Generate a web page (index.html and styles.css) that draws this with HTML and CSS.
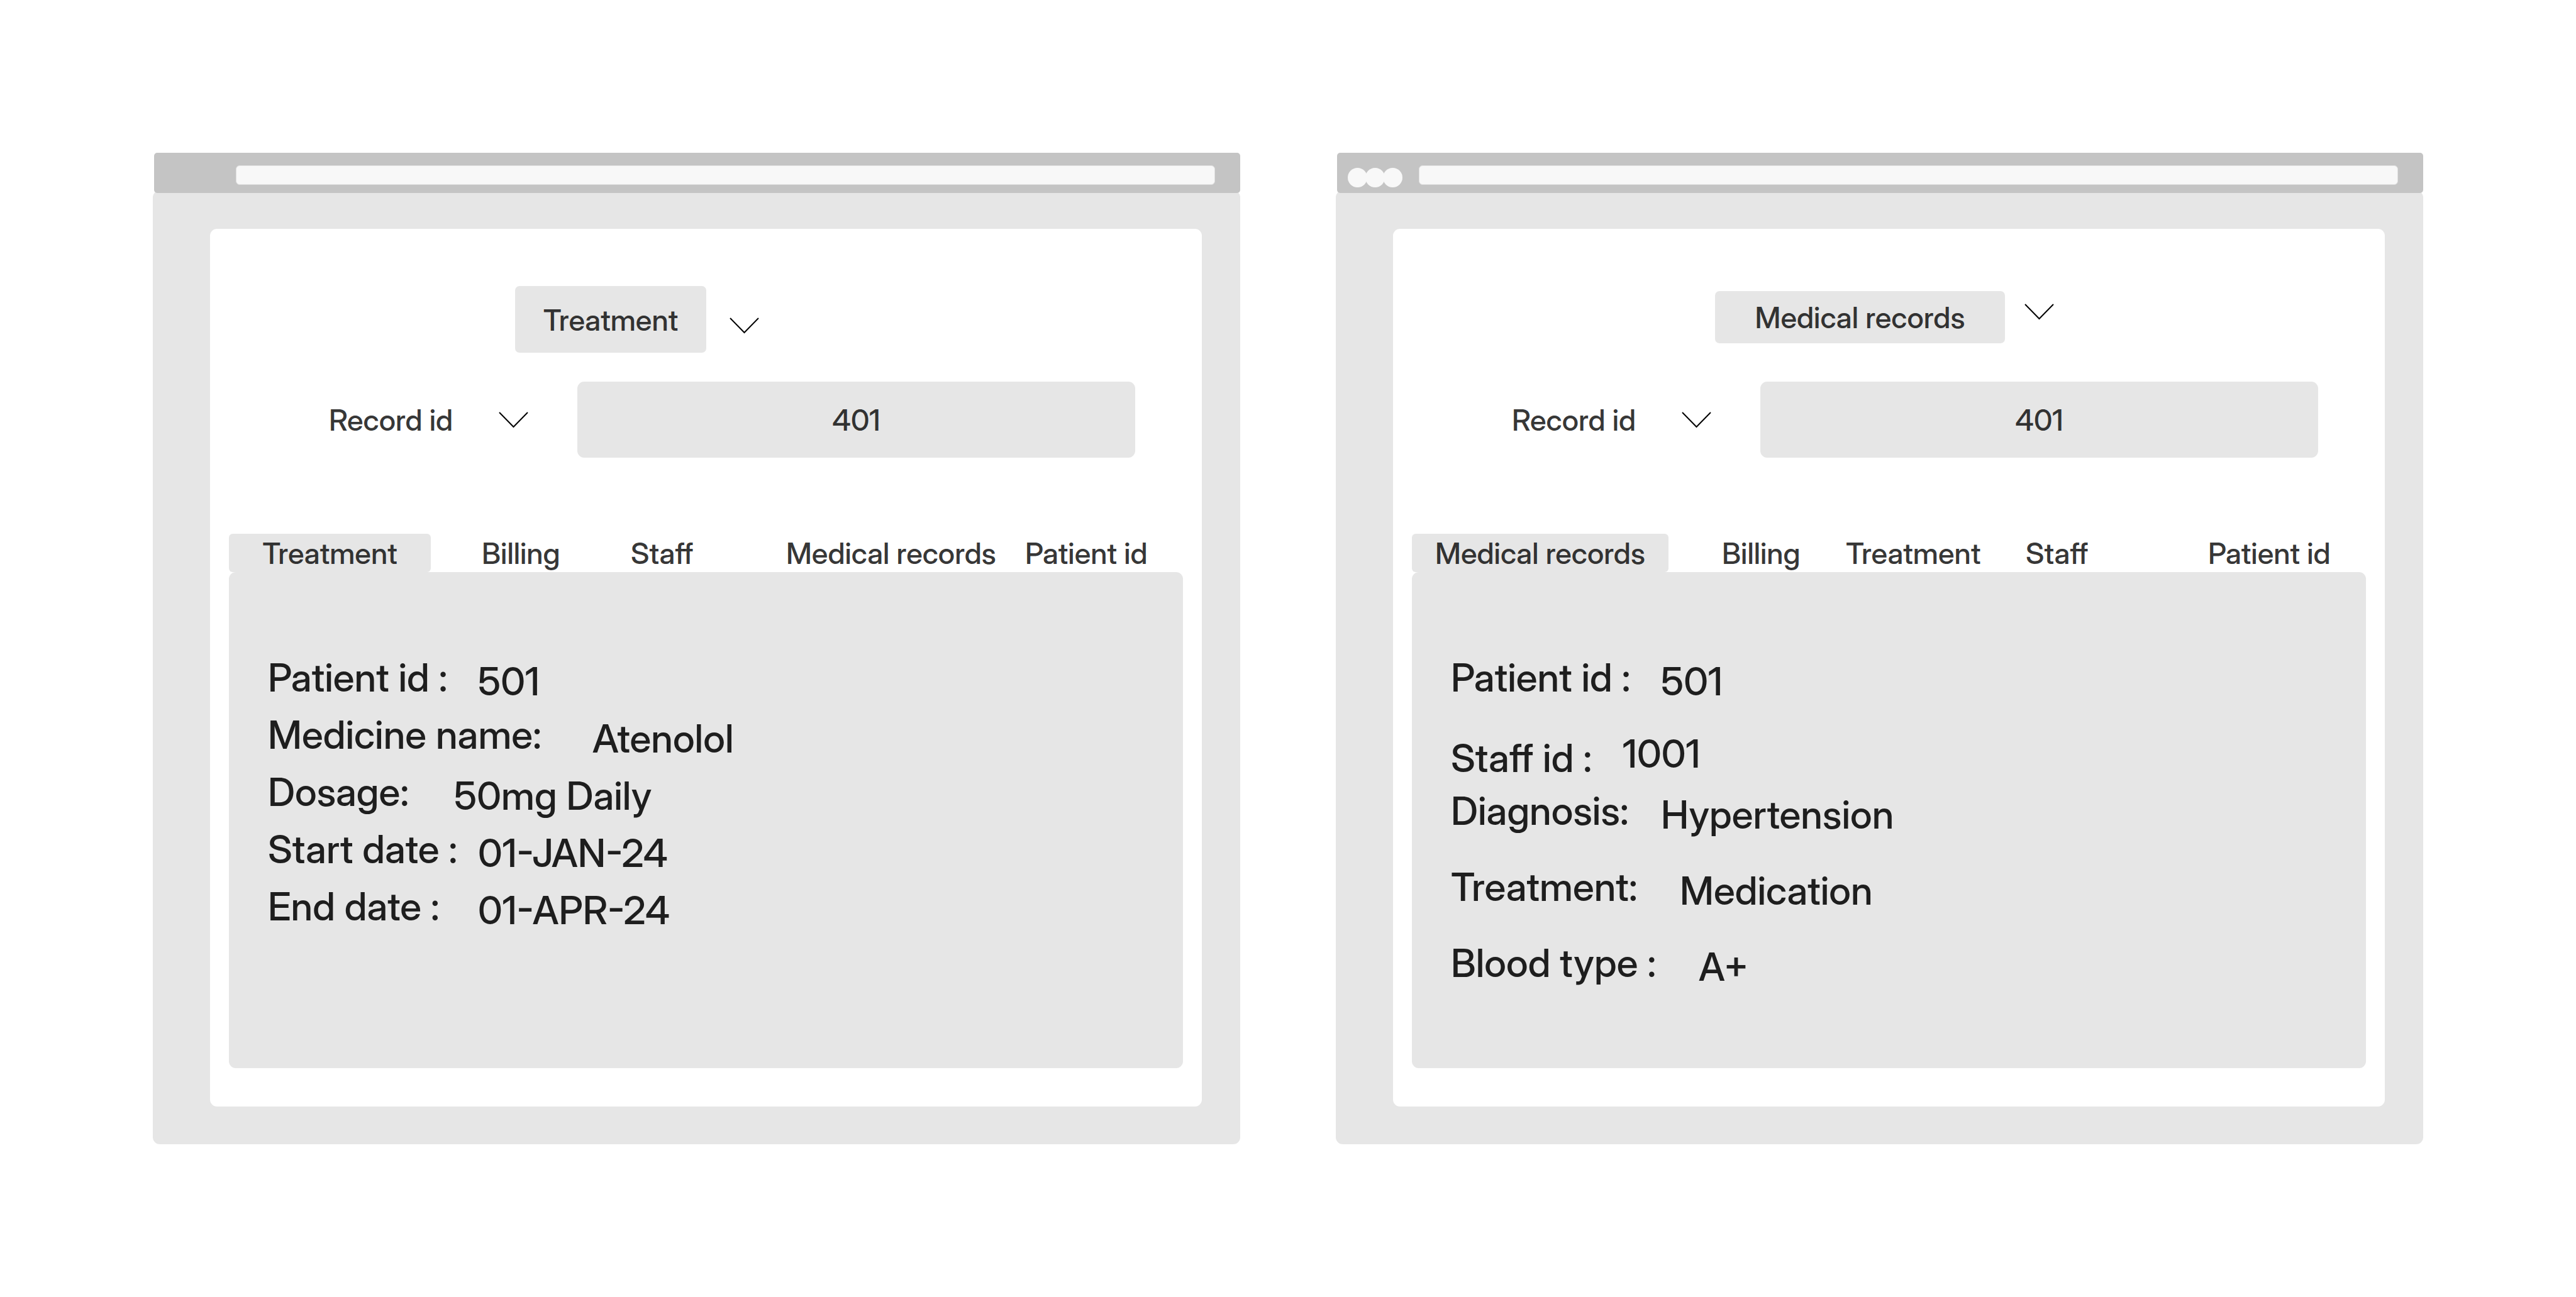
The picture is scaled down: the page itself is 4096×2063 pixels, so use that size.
FILE: index.html
```html
<!DOCTYPE html>
<html lang="en">
<head>
<meta charset="utf-8">
<title>Patient records</title>
<link rel="stylesheet" href="styles.css">
</head>
<body>
<main class="board">
  <section class="window" aria-label="Treatment record">
    <header class="titlebar">
      <div class="dots"></div>
      <input class="address" type="text" aria-label="Address">
    </header>
    <div class="frame">
      <div class="panel">
        <div class="picker picker-tall">
          <select class="picker-select" aria-label="Record type">
            <option>Treatment</option>
          </select>
          <svg class="chevron" viewBox="0 0 47 26" aria-hidden="true"><path d="M1 1 L23.500 24 L46 1"/></svg>
        </div>
        <div class="search">
          <select class="search-field" aria-label="Search by">
            <option>Record id</option>
          </select>
          <svg class="chevron" viewBox="0 0 47 26" aria-hidden="true"><path d="M1 1 L23.500 24 L46 1"/></svg>
          <input class="search-value" type="text" value="401" aria-label="Record id">
        </div>
        <div class="tabs tabs-treatment" role="tablist">
          <button class="tab tab-active" role="tab" aria-selected="true">Treatment</button>
          <button class="tab" role="tab">Billing</button>
          <button class="tab" role="tab">Staff</button>
          <button class="tab" role="tab">Medical records</button>
          <button class="tab" role="tab">Patient id</button>
        </div>
        <dl class="details">
          <div class="row"><dt class="label">Patient id :</dt><dd class="value">501</dd></div>
          <div class="row"><dt class="label label-widest">Medicine name:</dt><dd class="value">Atenolol</dd></div>
          <div class="row"><dt class="label label-short">Dosage:</dt><dd class="value">50mg Daily</dd></div>
          <div class="row"><dt class="label">Start date :</dt><dd class="value">01-JAN-24</dd></div>
          <div class="row"><dt class="label">End date :</dt><dd class="value">01-APR-24</dd></div>
        </dl>
      </div>
    </div>
  </section>

  <section class="window" aria-label="Medical record">
    <header class="titlebar">
      <div class="dots"><span class="dot"></span><span class="dot"></span><span class="dot"></span></div>
      <input class="address" type="text" aria-label="Address">
    </header>
    <div class="frame">
      <div class="panel">
        <div class="picker picker-wide">
          <select class="picker-select" aria-label="Record type">
            <option>Medical records</option>
          </select>
          <svg class="chevron" viewBox="0 0 47 26" aria-hidden="true"><path d="M1 1 L23.500 24 L46 1"/></svg>
        </div>
        <div class="search">
          <select class="search-field" aria-label="Search by">
            <option>Record id</option>
          </select>
          <svg class="chevron" viewBox="0 0 47 26" aria-hidden="true"><path d="M1 1 L23.500 24 L46 1"/></svg>
          <input class="search-value" type="text" value="401" aria-label="Record id">
        </div>
        <div class="tabs tabs-medical" role="tablist">
          <button class="tab tab-active" role="tab" aria-selected="true">Medical records</button>
          <button class="tab" role="tab">Billing</button>
          <button class="tab" role="tab">Treatment</button>
          <button class="tab" role="tab">Staff</button>
          <button class="tab" role="tab">Patient id</button>
        </div>
        <dl class="details">
          <div class="row row-spaced"><dt class="label">Patient id :</dt><dd class="value">501</dd></div>
          <div class="row row-raised"><dt class="label label-shortest">Staff id :</dt><dd class="value">1001</dd></div>
          <div class="row row-spaced"><dt class="label">Diagnosis:</dt><dd class="value">Hypertension</dd></div>
          <div class="row row-spaced"><dt class="label label-long">Treatment:</dt><dd class="value">Medication</dd></div>
          <div class="row row-spaced"><dt class="label label-longer">Blood type :</dt><dd class="value">A+</dd></div>
        </dl>
      </div>
    </div>
  </section>
</main>
</body>
</html>
```

FILE: styles.css
```css
* {
  box-sizing: border-box;
}

body {
  margin: 0;
  background: #fff;
  color: rgba(0, 0, 0, 0.8);
  font-family: "Inter Display", Inter, "Liberation Sans", sans-serif;
  font-size: 47px;
  font-weight: 500;
}

button,
input,
select {
  margin: 0;
  padding: 0;
  border: 0;
  background: none;
  color: inherit;
  font: inherit;
  appearance: none;
}

.board {
  display: grid;
  grid-template-columns: 1fr 1fr;
  gap: 152px;
  padding: 243px;
}

/* Browser chrome */
.titlebar {
  position: relative;
  display: grid;
  grid-template-columns: 130px 1fr;
  align-items: start;
  height: 64px;
  margin-left: 2px;
  padding-right: 40px;
  border-radius: 5px;
  background: #c4c4c4;
}

.dots {
  display: flex;
  padding: 24px 0 0 17px;
}

.dot {
  width: 31px;
  height: 31px;
  margin-right: -3px;
  border-radius: 50%;
  background: #f8f8f8;
}

.address {
  width: 100%;
  height: 31px;
  margin-top: 20px;
  border: 1px solid #e0e0e0;
  border-radius: 6px;
  background: #f8f8f8;
}

.frame {
  margin-top: -4px;
  padding: 61px 61px 60px 91px;
  border-radius: 11px;
  background: #e6e6e6;
}

.panel {
  padding-bottom: 61px;
  border-radius: 11px;
  background: #fff;
}

.chevron {
  flex: none;
  width: 47px;
  height: 26px;
  fill: none;
  stroke: #000;
  stroke-width: 2;
}

/* Record type picker */
.picker {
  display: flex;
  align-items: flex-start;
  height: 243px;
}

.picker-select {
  border-radius: 7px;
  background: #e6e6e6;
  text-align: center;
  text-align-last: center;
}

.picker-tall {
  padding: 91px 0 0 485px;
  gap: 37px;
}

.picker-tall .picker-select {
  width: 304px;
  height: 106px;
}

.picker-tall .chevron {
  margin-top: 50px;
}

.picker-wide {
  padding: 99px 0 0 512px;
  gap: 31px;
}

.picker-wide .picker-select {
  width: 461px;
  height: 83px;
}

.picker-wide .chevron {
  margin-top: 20px;
}

/* Search line */
.search {
  display: flex;
  align-items: center;
  padding: 0 106px 0 189px;
}

.search-field {
  width: 270px;
}

.search-value {
  flex: 1;
  min-width: 0;
  height: 121px;
  margin-left: 78px;
  border-radius: 11px;
  background: #e6e6e6;
  text-align: center;
}

/* Tabs */
.tabs {
  display: grid;
  margin: 121px 30px 0;
}

.tabs-treatment {
  grid-template-columns: 402fr 237fr 247fr 380fr 251fr;
}

.tabs-medical {
  grid-template-columns: 493fr 197fr 286fr 290fr 251fr;
}

.tab {
  height: 61px;
  text-align: left;
  white-space: nowrap;
}

.tab-active {
  border-radius: 6px;
  background: #e6e6e6;
  text-align: center;
}

.tabs-treatment .tab-active {
  width: 321px;
}

.tabs-medical .tab-active {
  width: 408px;
}

/* Record details */
.details {
  min-height: 789px;
  margin: 0 30px;
  padding: 128px 62px 0;
  border-radius: 11px;
  background: #e6e6e6;
  color: rgba(0, 0, 0, 0.87);
  font-size: 62px;
  line-height: 80px;
}

.row {
  display: flex;
  align-items: flex-start;
  height: 91px;
}

.row-spaced {
  height: 121px;
}

.label {
  width: 334px;
  white-space: nowrap;
}

.label-shortest {
  width: 273px;
}

.label-short {
  width: 296px;
}

.label-long {
  width: 364px;
}

.label-longer {
  width: 394px;
}

.label-widest {
  width: 516px;
}

.value {
  margin: 0;
  padding-top: 6px;
}

.row-raised .label {
  padding-top: 7px;
}

.row-raised .value {
  padding-top: 0;
}
```
